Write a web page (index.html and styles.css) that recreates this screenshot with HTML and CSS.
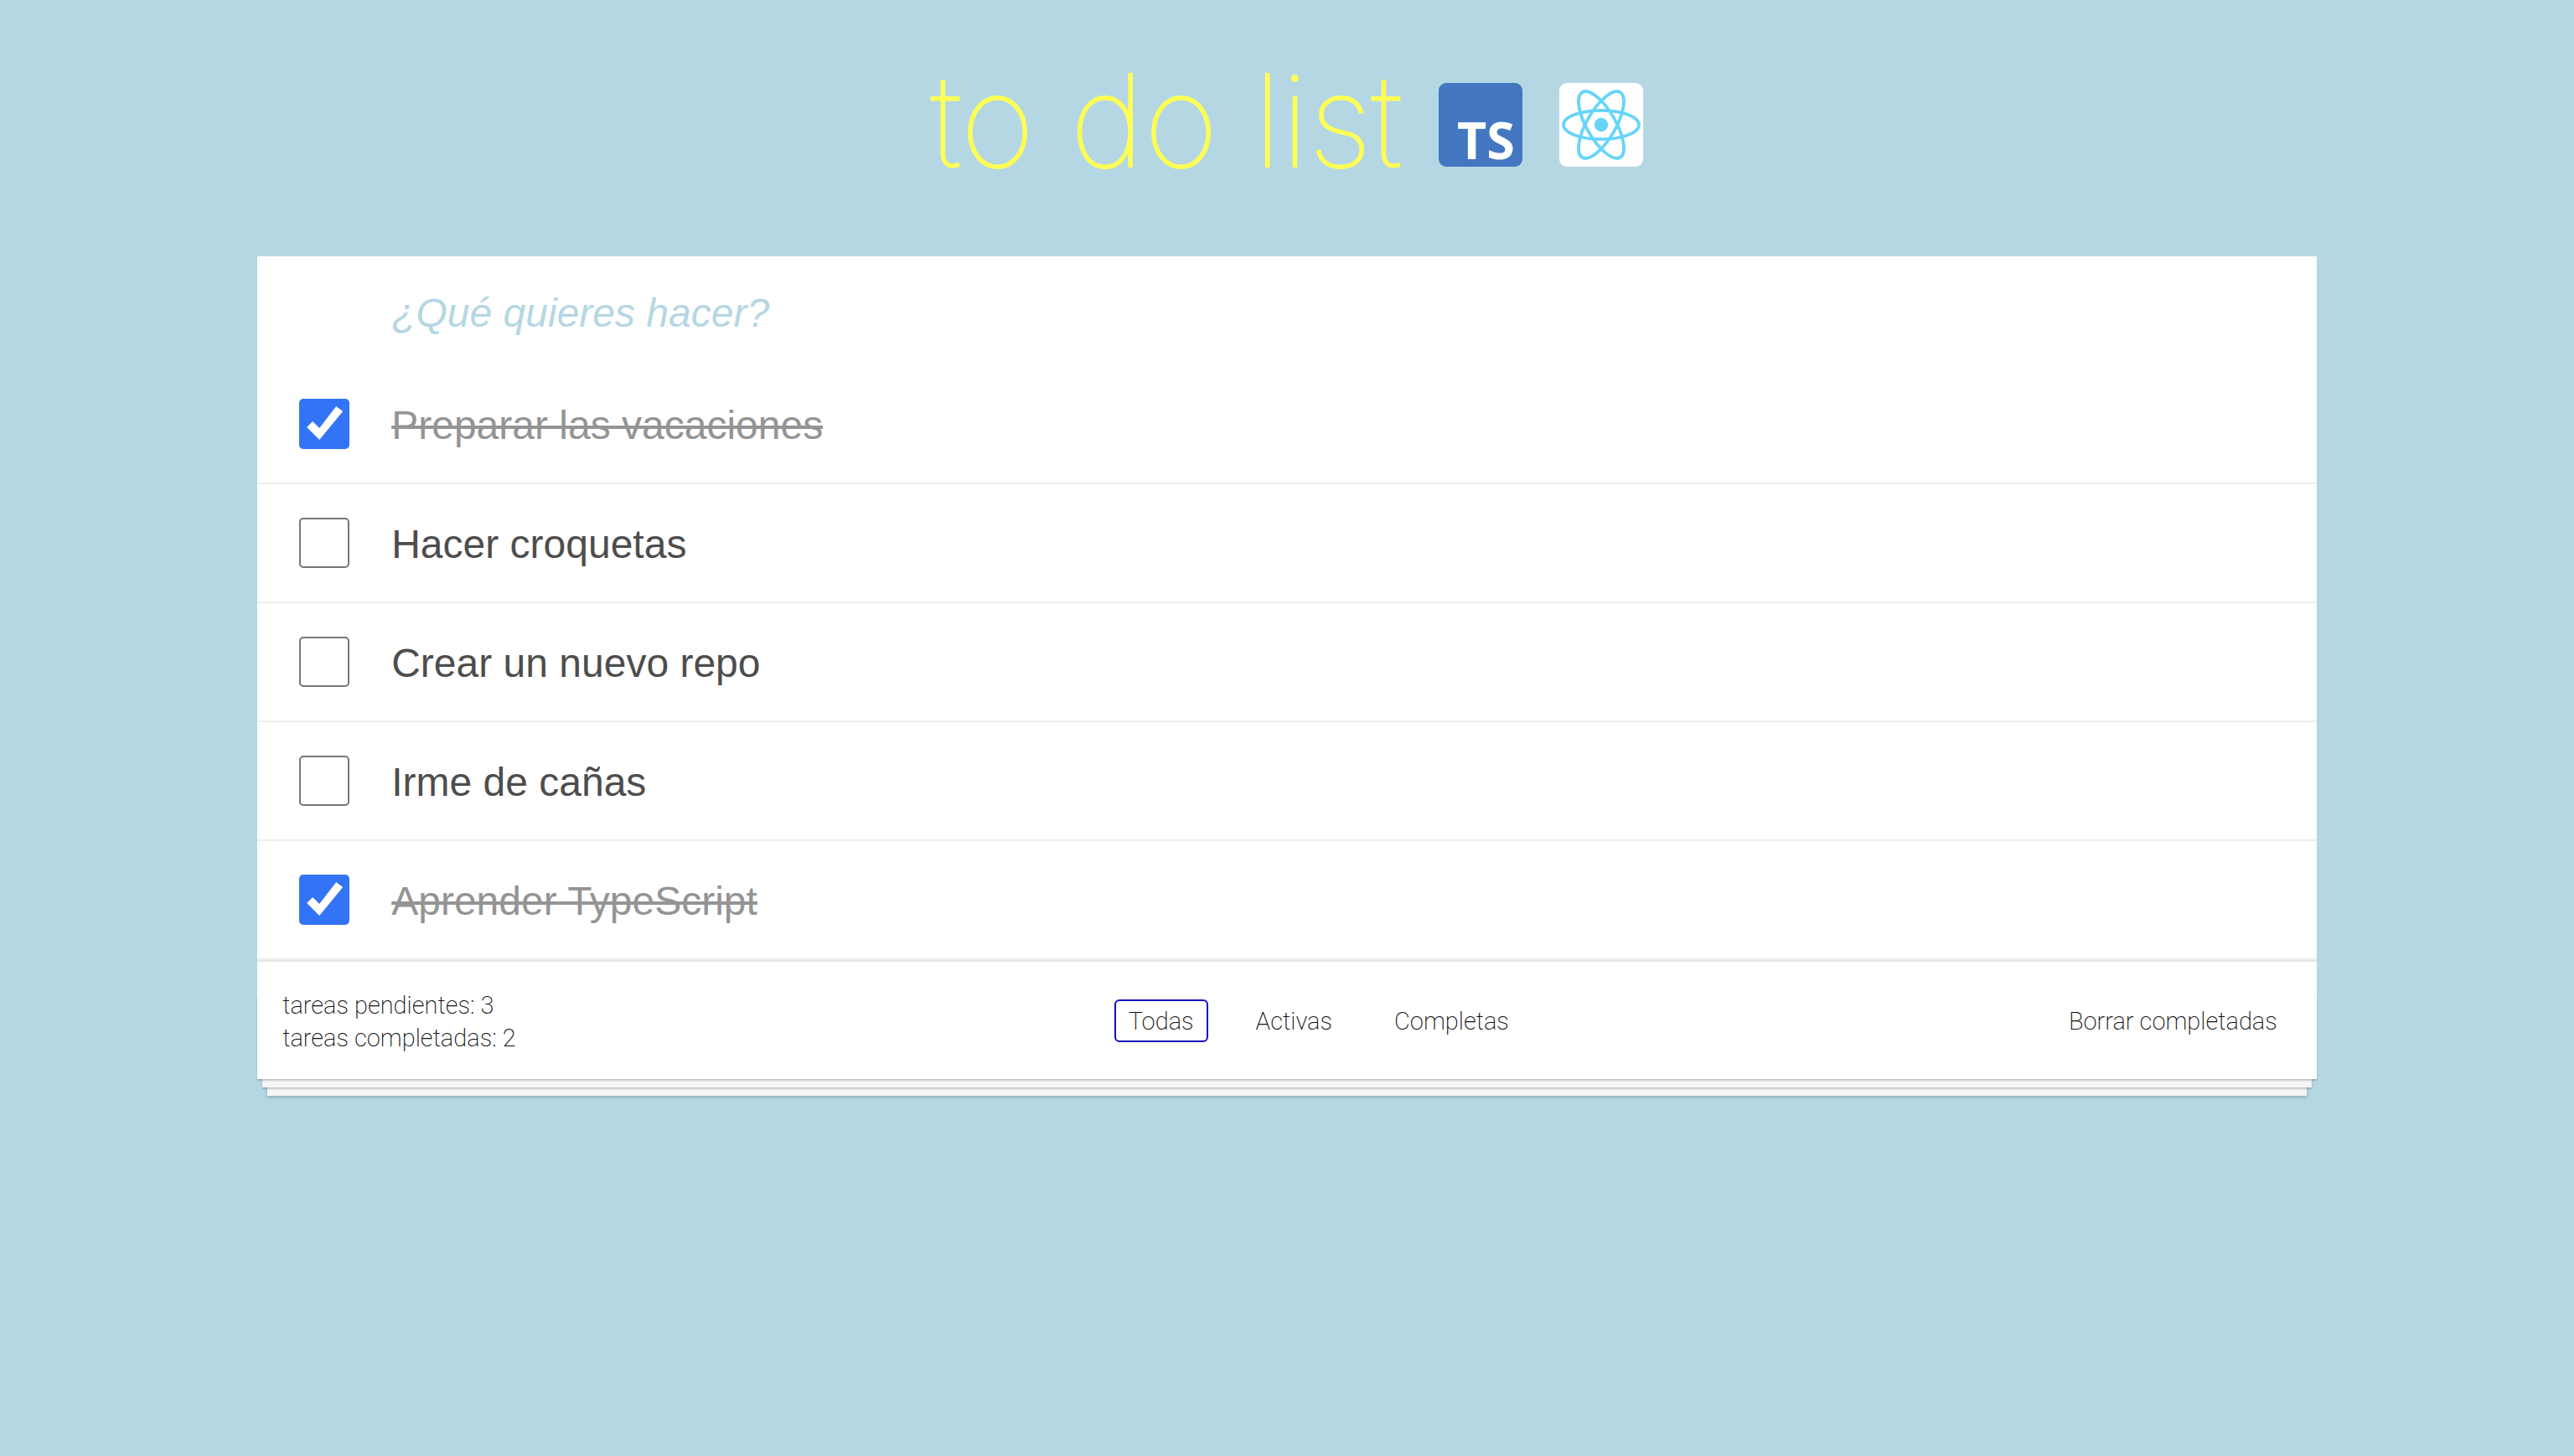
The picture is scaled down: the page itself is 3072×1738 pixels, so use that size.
FILE: index.html
```html
<!DOCTYPE html>
<html lang="es">
<head>
  <meta charset="utf-8">
  <meta name="viewport" content="width=device-width, initial-scale=1">
  <title>to do list</title>
  <link rel="stylesheet" href="styles.css">
</head>
<body>
  <header class="header">
    <h1 class="title">to do list</h1>
    <svg class="logo" viewBox="0 0 100 100" role="img" aria-label="TypeScript">
      <rect width="100" height="100" rx="9" fill="#4377c1"/>
      <text class="logo-text" x="22" y="91">TS</text>
    </svg>
    <svg class="logo" viewBox="0 0 100 100" role="img" aria-label="React">
      <rect width="100" height="100" rx="9" fill="#fff"/>
      <circle cx="50" cy="50" r="8.2" fill="#67d5fa"/>
      <g fill="none" stroke="#67d5fa" stroke-width="3.8">
        <ellipse cx="50" cy="50" rx="45" ry="17.2"/>
        <ellipse cx="50" cy="50" rx="45" ry="17.2" transform="rotate(60 50 50)"/>
        <ellipse cx="50" cy="50" rx="45" ry="17.2" transform="rotate(120 50 50)"/>
      </g>
    </svg>
  </header>

  <main class="card">
    <form class="new-todo">
      <input class="new-todo-input" type="text" placeholder="¿Qué quieres hacer?" aria-label="Nueva tarea">
    </form>

    <ul class="todos">
      <li class="todo">
        <input class="check" type="checkbox" id="todo-1" checked>
        <label class="todo-label" for="todo-1">Preparar las vacaciones</label>
      </li>
      <li class="todo">
        <input class="check" type="checkbox" id="todo-2">
        <label class="todo-label" for="todo-2">Hacer croquetas</label>
      </li>
      <li class="todo">
        <input class="check" type="checkbox" id="todo-3">
        <label class="todo-label" for="todo-3">Crear un nuevo repo</label>
      </li>
      <li class="todo">
        <input class="check" type="checkbox" id="todo-4">
        <label class="todo-label" for="todo-4">Irme de cañas</label>
      </li>
      <li class="todo">
        <input class="check" type="checkbox" id="todo-5" checked>
        <label class="todo-label" for="todo-5">Aprender TypeScript</label>
      </li>
    </ul>

    <footer class="footer">
      <div class="counts">
        <p class="count">tareas pendientes: 3</p>
        <p class="count">tareas completadas: 2</p>
      </div>
      <ul class="filters">
        <li><button class="button button-selected" type="button">Todas</button></li>
        <li><button class="button" type="button">Activas</button></li>
        <li><button class="button" type="button">Completas</button></li>
      </ul>
      <button class="button" type="button">Borrar completadas</button>
    </footer>
  </main>
</body>
</html>
```
FILE: styles.css
```css
* {
  box-sizing: border-box;
}

body {
  min-height: 100vh;
  margin: 0;
  padding-bottom: 60px;
  background: #b5d7e3;
  color: #4d4d4d;
  font-family: "Liberation Sans", Arial, sans-serif;
}

.header {
  display: flex;
  justify-content: center;
  align-items: baseline;
  gap: 44px;
  padding: 54px 0 72px;
}

.title {
  margin: 0;
  color: #ffff54;
  font: 100 152px/180px Inter, sans-serif;
  -webkit-text-stroke: 2px #ffff54;
}

.logo {
  width: 100px;
  height: 100px;
}

.logo-text {
  fill: #fff;
  font: 700 61px "Noto Sans", sans-serif;
}

.card {
  width: 80%;
  margin: 0 auto;
  background: #fff;
}

.new-todo-input {
  display: block;
  width: 100%;
  height: 130px;
  padding: 4px 32px 0 160px;
  border: 0;
  outline: 0;
  background: none;
  color: inherit;
  font: 48px "Liberation Sans", Arial, sans-serif;
}

.new-todo-input::placeholder {
  color: #b5d7e3;
  font-style: italic;
  opacity: 1;
}

.todos,
.filters {
  margin: 0;
  padding: 0;
  list-style: none;
}

.todo {
  display: flex;
  align-items: center;
  gap: 50px;
  height: 142px;
  padding: 0 50px;
  border-bottom: 2px solid #ededed;
}

.check {
  appearance: none;
  flex: none;
  width: 60px;
  height: 60px;
  margin: 0;
  border: 2px solid #767676;
  border-radius: 5px;
  background: #fff;
}

.check:checked {
  border: 0;
  background: #3374f6;
}

.check:checked::before {
  content: "";
  display: block;
  width: 60px;
  height: 60px;
  background: #fff;
  clip-path: polygon(9px 34px, 16px 27px, 24px 35px, 44px 9px, 52px 15px, 24px 49px);
}

.todo-label {
  padding-top: 4px;
  font-size: 48px;
  line-height: 58px;
}

.check:checked + .todo-label {
  color: #949494;
  text-decoration: line-through;
  text-decoration-thickness: 4px;
  text-decoration-skip-ink: none;
}

.footer {
  position: relative;
  display: flex;
  justify-content: space-between;
  align-items: center;
  min-height: 142px;
  padding: 0 30px;
  border-top: 2px solid #e6e6e6;
  color: #111;
  font: 200 29px/39px Roboto, sans-serif;
}

/* Stack of paper sheets under the card */
.footer::before {
  content: "";
  position: absolute;
  right: 0;
  bottom: 0;
  left: 0;
  height: 100px;
  box-shadow:
    0 2px 2px rgba(0, 0, 0, 0.2),
    0 16px 0 -6px #f6f6f6,
    0 18px 2px -6px rgba(0, 0, 0, 0.2),
    0 32px 0 -12px #f6f6f6,
    0 34px 4px -12px rgba(0, 0, 0, 0.2);
  pointer-events: none;
}

.counts {
  padding-top: 4px;
}

.count {
  margin: 0;
}

.filters {
  display: flex;
  gap: 40px;
  padding-left: 80px;
}

.button {
  display: block;
  padding: 5px 15px 3px;
  border: 2px solid transparent;
  border-radius: 6px;
  background: none;
  color: inherit;
  font: inherit;
  cursor: pointer;
}

.button-selected {
  border-color: #1409c0;
}
```
